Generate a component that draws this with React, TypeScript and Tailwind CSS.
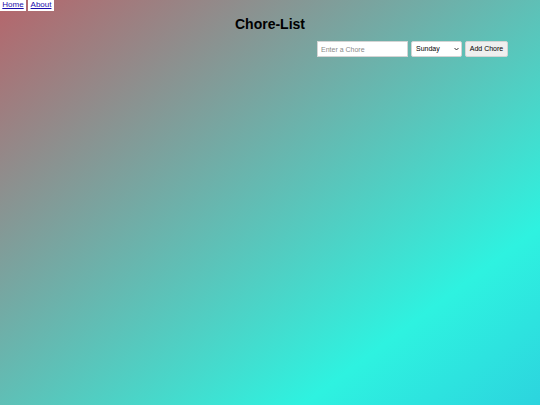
import React from 'react';

const days = ['Sunday', 'Monday', 'Tuesday', 'Wednesday', 'Thursday', 'Friday', 'Saturday'];

export default function App() {
  return (
    <div className="min-h-screen w-full bg-[linear-gradient(to_bottom_right,#b6656b_0%,#2ef2e0_78%,#2cd4de_100%)] font-['Liberation_Sans',Arial,sans-serif]">
      <nav className="flex gap-[2px]">
        <a href="#" className="h-[11px] w-[26px] bg-white text-center text-[8px] leading-[9px] text-[#1a0dab] underline">
          Home
        </a>
        <a href="#" className="h-[11px] w-[26px] bg-white text-center text-[8px] leading-[9px] text-[#1a0dab] underline">
          About
        </a>
      </nav>

      <h1 className="mt-[5px] text-center text-[14px] font-bold leading-[16px] text-black">Chore-List</h1>

      <form className="mt-[9px] flex items-start justify-end gap-[3px] pr-[32px]" onSubmit={(e) => e.preventDefault()}>
        <input
          type="text"
          placeholder="Enter a Chore"
          className="block h-[16px] w-[91px] shrink-0 border border-[#d4d4d4] bg-white px-[3px] text-[7px] text-black outline-none placeholder:text-[#8a8a8a]"
        />
        <div className="relative h-[16px] w-[51px] shrink-0">
          <select
            defaultValue="Sunday"
            className="block h-[16px] w-full appearance-none rounded-[2px] border border-[#d4d4d4] bg-white pl-[4px] text-[7px] leading-[14px] text-black outline-none"
          >
            {days.map((d) => (
              <option key={d}>{d}</option>
            ))}
          </select>
          <svg
            viewBox="0 0 10 6"
            className="pointer-events-none absolute right-[3px] top-[6px] h-[4px] w-[5px]"
            fill="none"
            stroke="#222"
            strokeWidth="1.8"
          >
            <path d="M1 1l4 4 4-4" />
          </svg>
        </div>
        <button
          type="submit"
          className="block h-[16px] w-[43px] shrink-0 rounded-[2px] border border-[#d4d4d4] bg-[#efefef] text-[7px] text-black"
        >
          Add Chore
        </button>
      </form>
    </div>
  );
}
